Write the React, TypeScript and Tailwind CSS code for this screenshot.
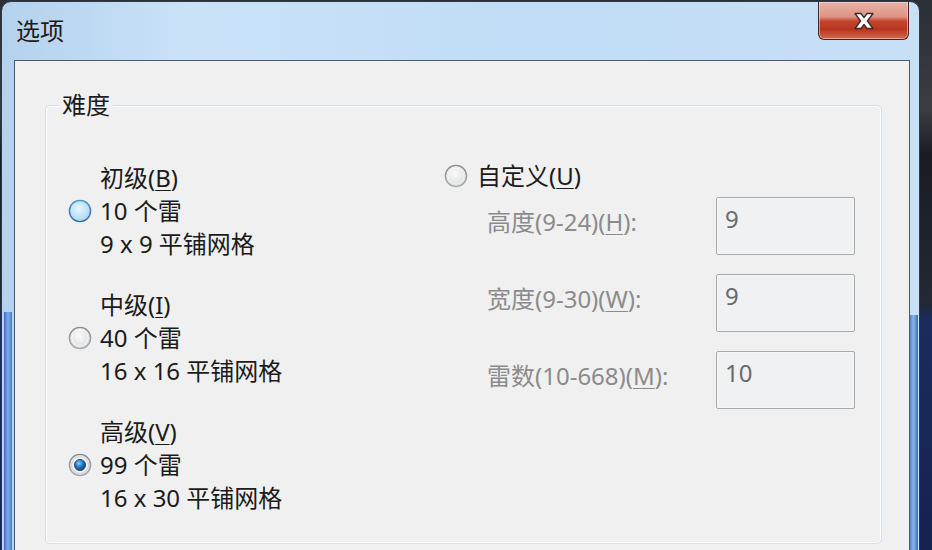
import React from "react";

type RadioKind = "off" | "hover" | "on";

function Radio({ kind, id }: { kind: RadioKind; id: string }) {
  return (
    <svg width="24" height="24" viewBox="0 0 24 24" className="block">
      <defs>
        <linearGradient id={`ring-${id}`} x1="0" y1="0" x2="0" y2="1">
          <stop offset="0" stopColor={kind === "hover" ? "#4a8fc4" : "#8a8d90"} />
          <stop offset="1" stopColor={kind === "hover" ? "#2f6d9f" : "#a8aaad"} />
        </linearGradient>
        <radialGradient id={`fill-${id}`} cx="0.45" cy="0.4" r="0.65">
          <stop offset="0" stopColor={kind === "hover" ? "#e9f6fe" : "#fbfbfb"} />
          <stop offset="0.7" stopColor={kind === "hover" ? "#b9def6" : "#e2e3e4"} />
          <stop offset="1" stopColor={kind === "hover" ? "#9ccdee" : "#cfd1d3"} />
        </radialGradient>
        <radialGradient id={`dot-${id}`} cx="0.4" cy="0.35" r="0.7">
          <stop offset="0" stopColor="#8fd0fb" />
          <stop offset="0.45" stopColor="#2a7cc4" />
          <stop offset="1" stopColor="#0d3f78" />
        </radialGradient>
      </defs>
      <circle cx="12" cy="12" r="10.6" fill={`url(#fill-${id})`} stroke={`url(#ring-${id})`} strokeWidth="1.4" />
      {kind === "off" && <circle cx="12" cy="12" r="8.2" fill="none" stroke="#ffffff" strokeOpacity="0.7" strokeWidth="1" />}
      {kind === "on" && (
        <>
          <circle cx="12" cy="12" r="8.4" fill="#f4f4f4" stroke="#c9cbcd" strokeWidth="0.8" />
          <circle cx="12" cy="12" r="5.6" fill={`url(#dot-${id})`} stroke="#123d6a" strokeWidth="0.8" />
        </>
      )}
    </svg>
  );
}

function Level({
  title,
  hot,
  mines,
  grid,
  kind,
  id,
  first,
}: {
  title: string;
  hot: string;
  mines: string;
  grid: string;
  kind: RadioKind;
  id: string;
  first?: boolean;
}) {
  return (
    <div className={`grid grid-cols-[32px_auto] grid-rows-[33px_33px_33px] leading-[33px] ${first ? "" : "mt-[28px]"}`}>
      <div />
      <div>
        {title}(<u className="underline-offset-[3px] decoration-1">{hot}</u>)
      </div>
      <div className="flex items-center">
        <Radio kind={kind} id={id} />
      </div>
      <div>{mines}</div>
      <div />
      <div>{grid}</div>
    </div>
  );
}

function Field({ label, hot, value, first }: { label: string; hot: string; value: string; first?: boolean }) {
  return (
    <div className={`flex items-start ${first ? "mt-[5px]" : "mt-[19px]"}`}>
      <div className="ml-[43px] w-[229px] mt-[8px] leading-[33px] text-[#8b8b8b]">
        {label}(<u className="underline-offset-[3px] decoration-1">{hot}</u>):
      </div>
      <div className="w-[139px] h-[58px] border border-[#a7a9ab] rounded-[2px] bg-[#f0f1f2] shadow-[inset_0_0_0_1px_#f7f7f7] pl-[8px] pt-[4px] leading-[33px] text-[#6a6a6a]">
        {value}
      </div>
    </div>
  );
}

export default function App() {
  const font = { fontFamily: '"Noto Sans", "Noto Sans CJK SC", sans-serif' };
  return (
    <div
      className="w-[932px] h-[550px] overflow-hidden flex bg-[linear-gradient(180deg,#2b2f36_0%,#3a3d42_20%,#191c22_28%,#232834_55%,#1b2c5c_58%,#142250_100%)]"
      style={font}
    >
      <div className="ml-[1px] mt-[1px] w-[919px] h-[600px] shrink-0 rounded-t-[10px] border border-[#2f3a48] bg-[linear-gradient(90deg,#b4d1ee_0%,#c9e2f8_20%,#c0dcf6_60%,#c8e0f6_100%)] flex flex-col relative">
        {/* left glass stripe */}
        <div className="absolute left-[2px] top-[310px] w-[8px] h-[300px] bg-[linear-gradient(90deg,#3d6fb8,#7eaee4,#4a7cc3)]" />
        {/* right glass stripe */}
        <div className="absolute right-[1px] top-[313px] w-[9px] h-[300px] bg-[linear-gradient(90deg,#4678c4,#86b4e8,#3f6db7)]" />
        <div className="h-[58px] shrink-0 relative flex items-start">
          <div className="ml-[14px] mt-[14px] text-[24px] leading-[30px] text-[#1a1a1a]">选项</div>
          <div className="absolute right-[10px] top-0 w-[91px] h-[38px] rounded-b-[6px] border border-t-0 border-[#4a2320] bg-[linear-gradient(180deg,#e9b3a6_0%,#dd9484_40%,#c4432c_52%,#b8361f_75%,#d46a4c_100%)] shadow-[inset_0_0_0_1px_rgba(255,220,210,0.55)] flex items-center justify-center">
            <svg width="26" height="20" viewBox="0 0 26 20">
              <path
                d="M4 2.5 L10 2.5 L13 6.6 L16 2.5 L22 2.5 L16.4 10 L22 17.5 L16 17.5 L13 13.4 L10 17.5 L4 17.5 L9.6 10 Z"
                fill="#ffffff"
                stroke="#3a2a28"
                strokeWidth="1.3"
                strokeLinejoin="round"
              />
            </svg>
          </div>
        </div>
        <div className="ml-[12px] w-[896px] flex-1 border-t border-l border-r border-[#4b5a6d] bg-[#f0f0f0] relative">
          <div className="mt-[44px] ml-[30px] w-[837px] h-[439px] relative rounded-[5px] border border-[#d5dfe5] shadow-[inset_0_0_0_1px_#ffffff] text-[24px] text-[#1b1b1b] flex">
            <span className="absolute left-[13px] top-[-15px] px-[3px] bg-[#f0f0f0] leading-[28px] text-[24px]">难度</span>
            <div className="ml-[22px] w-[376px] pt-[55px]">
              <Level title="初级" hot="B" mines="10 个雷" grid="9 x 9 平铺网格" kind="hover" id="a" first />
              <Level title="中级" hot="I" mines="40 个雷" grid="16 x 16 平铺网格" kind="off" id="b" />
              <Level title="高级" hot="V" mines="99 个雷" grid="16 x 30 平铺网格" kind="on" id="c" />
            </div>
            <div className="pt-[53px] flex flex-col">
              <div className="flex items-center h-[33px] leading-[33px]">
                <Radio kind="off" id="d" />
                <span className="ml-[9px]">
                  自定义(<u className="underline-offset-[3px] decoration-1">U</u>)
                </span>
              </div>
              <Field label="高度(9-24)" hot="H" value="9" first />
              <Field label="宽度(9-30)" hot="W" value="9" />
              <Field label="雷数(10-668)" hot="M" value="10" />
            </div>
          </div>
        </div>
      </div>
    </div>
  );
}
